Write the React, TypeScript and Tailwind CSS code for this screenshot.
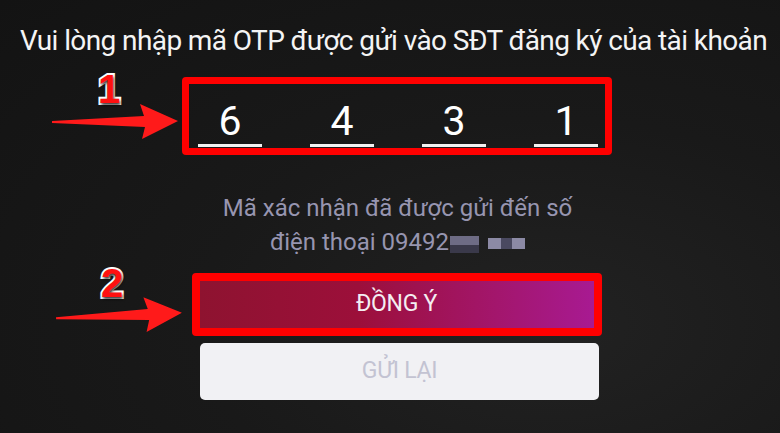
import React from "react";

function Arrow({ className }: { className?: string }) {
  return (
    <svg className={className} viewBox="0 0 126 36" width="126" height="36">
      <path d="M0 17 L92 12 L88 0 L126 17 L90 35 L93 23 L0 19 Z" fill="#ff1a1a" />
    </svg>
  );
}

function Badge({ n, className }: { n: string; className?: string }) {
  return (
    <div
      className={`absolute text-[40px] leading-none font-bold text-[#ff1010] [-webkit-text-stroke:4px_#ffffff] [paint-order:stroke_fill] [text-shadow:1px_2px_3px_rgba(0,0,0,0.8)] ${className ?? ""}`}
      style={{ fontFamily: '"Liberation Sans", Arial, sans-serif' }}
    >
      {n}
    </div>
  );
}

export default function App() {
  const digits = ["6", "4", "3", "1"];
  return (
    <div
      className="relative w-[780px] h-[433px] overflow-hidden bg-[#161616] flex flex-col items-center"
      style={{ fontFamily: 'Roboto, "Noto Sans", sans-serif' }}
    >
      <div className="absolute inset-0 bg-[radial-gradient(ellipse_at_70%_75%,#222222_0%,#191919_45%,#131313_100%)]" />

      <div className="relative mt-[24px] ml-[7px] text-[28px] leading-[34px] text-[#f4f4f4] whitespace-nowrap tracking-[-0.6px]">
        Vui lòng nhập mã OTP được gửi vào SĐT đăng ký của tài khoản
      </div>

      <div className="relative mt-[19px] ml-[14px] w-[430px] h-[78px] border-[7px] border-[#ff0000] rounded-[4px] flex items-end pl-[9px] pb-[1px] gap-[48px]">
        {digits.map((d) => (
          <div key={d} className="w-[64px] flex flex-col items-center">
            <div className="text-[41px] leading-[41px] font-normal text-white">{d}</div>
            <div className="mt-[2px] w-[64px] h-[3px] bg-[#f2f2f2]" />
          </div>
        ))}
      </div>

      <div className="relative mt-[36px] ml-[15px] text-[24px] leading-[34px] text-[#9795b0] text-center">
        <div>Mã xác nhận đã được gửi đến số</div>
        <div className="flex items-center justify-center">
          <span>điện thoại 09492</span>
          <span className="ml-[1px] flex flex-col w-[29px] h-[17px] mt-[4px]">
            <span className="h-[9px] bg-[#6e6c85]" />
            <span className="h-[8px] bg-[#3a394a]" />
          </span>
          <span className="ml-[9px] flex w-[37px] h-[11px] mt-[2px]">
            <span className="w-[13px] bg-[#8c8aa5]" />
            <span className="w-[11px] bg-[#4a4960]" />
            <span className="w-[13px] bg-[#8c8aa5]" />
          </span>
        </div>
      </div>

      <div className="relative mt-[14px] ml-[13px] w-[410px] h-[63px] border-[8px] border-[#ff0000] rounded-[4px] bg-[linear-gradient(90deg,#8e1330_0%,#9c0f3a_40%,#a3166c_75%,#a81a92_100%)] flex items-center justify-center">
        <span className="text-[23px] text-[#f4eef2] tracking-[-0.3px]">ĐỒNG Ý</span>
      </div>

      <div className="relative mt-[7px] ml-[19px] w-[399px] h-[57px] rounded-[5px] bg-[#f1f1f4] flex items-center justify-center">
        <span className="text-[23px] text-[#c3c3d2] tracking-[-0.3px]">GỬI LẠI</span>
      </div>

      <Badge n="1" className="left-[98px] top-[69px]" />
      <Arrow className="absolute left-[52px] top-[104px]" />
      <Badge n="2" className="left-[101px] top-[263px]" />
      <Arrow className="absolute left-[56px] top-[298px] rotate-[-2deg]" />
    </div>
  );
}
